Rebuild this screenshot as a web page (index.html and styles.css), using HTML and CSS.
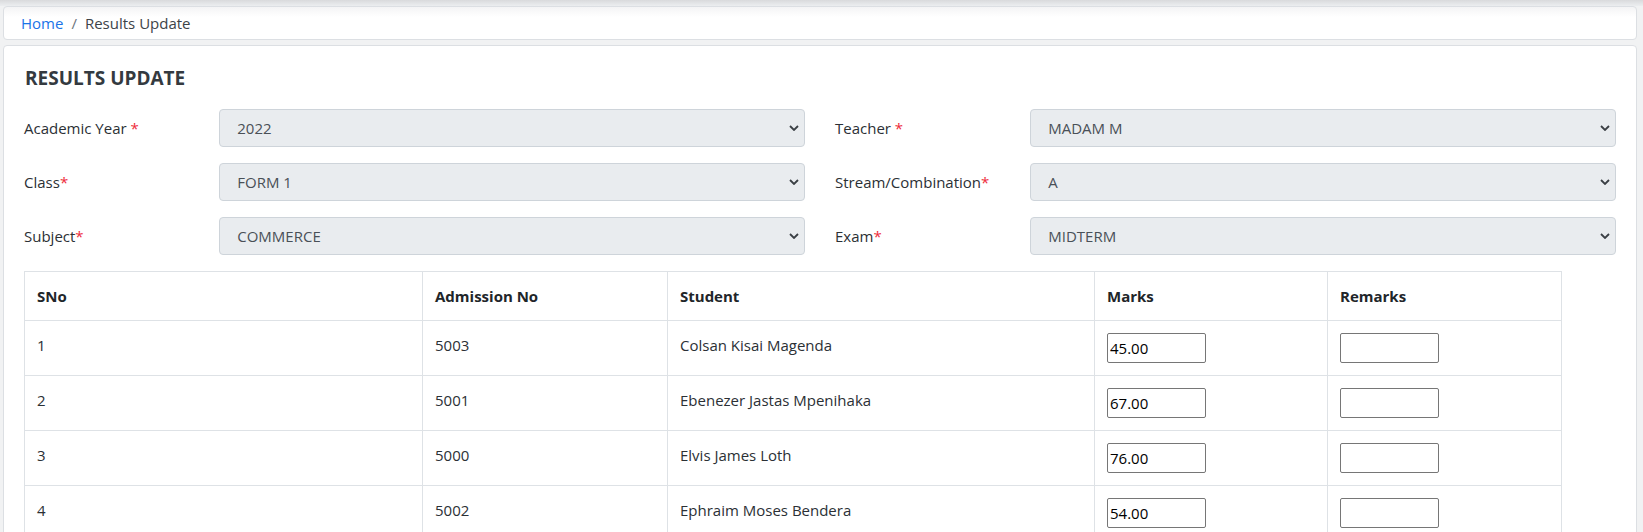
FILE: index.html
```html
<!DOCTYPE html>
<html lang="en">
<head>
<meta charset="utf-8">
<title>Results Update</title>
<link rel="stylesheet" href="styles.css">
</head>
<body>
<div class="page">
  <nav class="crumbs">
    <a class="crumb-link" href="#">Home</a>
    <span class="crumb-sep">/</span>
    <span class="crumb-current">Results Update</span>
  </nav>

  <section class="card">
    <h5 class="card-title">RESULTS UPDATE</h5>

    <div class="form-grid">
      <div class="field">
        <label class="field-label">Academic Year <span class="req">*</span></label>
        <div class="select"><span>2022</span><svg class="chev" width="10" height="6" viewBox="0 0 10 6"><polyline points="1,1 5,5 9,1" fill="none" stroke="#3a3f44" stroke-width="1.8"/></svg></div>
      </div>
      <div class="field">
        <label class="field-label">Teacher <span class="req">*</span></label>
        <div class="select"><span>MADAM M</span><svg class="chev" width="10" height="6" viewBox="0 0 10 6"><polyline points="1,1 5,5 9,1" fill="none" stroke="#3a3f44" stroke-width="1.8"/></svg></div>
      </div>
      <div class="field">
        <label class="field-label">Class<span class="req">*</span></label>
        <div class="select"><span>FORM 1</span><svg class="chev" width="10" height="6" viewBox="0 0 10 6"><polyline points="1,1 5,5 9,1" fill="none" stroke="#3a3f44" stroke-width="1.8"/></svg></div>
      </div>
      <div class="field">
        <label class="field-label">Stream/Combination<span class="req">*</span></label>
        <div class="select"><span>A</span><svg class="chev" width="10" height="6" viewBox="0 0 10 6"><polyline points="1,1 5,5 9,1" fill="none" stroke="#3a3f44" stroke-width="1.8"/></svg></div>
      </div>
      <div class="field">
        <label class="field-label">Subject<span class="req">*</span></label>
        <div class="select"><span>COMMERCE</span><svg class="chev" width="10" height="6" viewBox="0 0 10 6"><polyline points="1,1 5,5 9,1" fill="none" stroke="#3a3f44" stroke-width="1.8"/></svg></div>
      </div>
      <div class="field">
        <label class="field-label">Exam<span class="req">*</span></label>
        <div class="select"><span>MIDTERM</span><svg class="chev" width="10" height="6" viewBox="0 0 10 6"><polyline points="1,1 5,5 9,1" fill="none" stroke="#3a3f44" stroke-width="1.8"/></svg></div>
      </div>
    </div>

    <table class="results">
      <colgroup>
        <col class="c-sno"><col class="c-adm"><col class="c-stu"><col class="c-marks"><col class="c-rem">
      </colgroup>
      <thead>
        <tr><th>SNo</th><th>Admission No</th><th>Student</th><th>Marks</th><th>Remarks</th></tr>
      </thead>
      <tbody>
        <tr><td>1</td><td>5003</td><td>Colsan Kisai Magenda</td><td><input class="cell-input" type="text" value="45.00"></td><td><input class="cell-input" type="text" value=""></td></tr>
        <tr><td>2</td><td>5001</td><td>Ebenezer Jastas Mpenihaka</td><td><input class="cell-input" type="text" value="67.00"></td><td><input class="cell-input" type="text" value=""></td></tr>
        <tr><td>3</td><td>5000</td><td>Elvis James Loth</td><td><input class="cell-input" type="text" value="76.00"></td><td><input class="cell-input" type="text" value=""></td></tr>
        <tr><td>4</td><td>5002</td><td>Ephraim Moses Bendera</td><td><input class="cell-input" type="text" value="54.00"></td><td><input class="cell-input" type="text" value=""></td></tr>
      </tbody>
    </table>
  </section>
</div>
</body>
</html>
```

FILE: styles.css
```css
* { box-sizing: border-box; }

html, body { height: 100%; }

body {
  margin: 0;
  font-family: "Open Sans", "Noto Sans", Arial, sans-serif;
  font-size: 15px;
  line-height: 24px;
  color: #212529;
  background: linear-gradient(to bottom, #d9dadc 0, #eceef0 6px, #f1f2f3 6px) no-repeat, #f1f2f3;
}

.page {
  padding: 6px 6px 0 3px;
  display: flex;
  flex-direction: column;
  gap: 5px;
}

.crumbs {
  display: flex;
  align-items: center;
  gap: 8px;
  padding: 4px 17px;
  height: 34px;
  background: linear-gradient(to bottom, #f4f4f5 0, #ffffff 10px);
  border: 1px solid #dcdfe3;
  border-radius: 4px;
}

.crumb-link { color: #1a73e8; text-decoration: none; }
.crumb-sep { color: #6c757d; }
.crumb-current { color: #3d4348; }

.card {
  background: #fff;
  border: 1px solid #dcdfe3;
  border-radius: 4px;
  padding: 20px 20px 20px 20px;
}

.card-title {
  margin: 0 0 19px 1px;
  font-size: 19px;
  font-weight: 700;
  line-height: 24px;
  color: #343a40;
}

.form-grid {
  display: grid;
  grid-template-columns: 1fr 1fr;
  column-gap: 30px;
  row-gap: 16px;
}

.field {
  display: grid;
  grid-template-columns: 1fr 3fr;
  align-items: center;
}

.field-label { color: #2b3035; }
.req { color: #ee2b3b; }

.select {
  height: 38px;
  display: flex;
  align-items: center;
  justify-content: space-between;
  padding: 0 5px 0 17px;
  background: #e9ecef;
  border: 1px solid #ced4da;
  border-radius: 4px;
  color: #495057;
}

.chev { display: block; }

.results {
  margin-top: 16px;
  width: 1537px;
  table-layout: fixed;
  border-collapse: collapse;
  border: 1px solid #dee2e6;
}

.c-sno { width: 398px; }
.c-adm { width: 245px; }
.c-stu { width: 427px; }
.c-marks { width: 233px; }
.c-rem { width: 234px; }

.results th,
.results td {
  border: 1px solid #dee2e6;
  padding: 12px;
  text-align: left;
  vertical-align: top;
  line-height: 24px;
}

.results th { font-weight: 700; color: #212529; }
.results td { color: #2b3035; }

.cell-input {
  display: block;
  width: 99px;
  height: 30px;
  padding: 1px 2px;
  border: 1px solid #767676;
  border-radius: 2px;
  font-family: "Open Sans", "Noto Sans", Arial, sans-serif;
  font-size: 15px;
  color: #000;
  background: #fff;
}
```
